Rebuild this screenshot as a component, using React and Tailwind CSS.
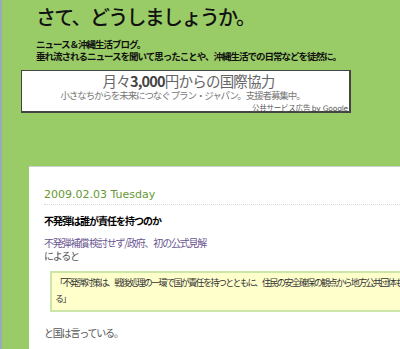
import React from "react";

const jp = { fontFamily: '"Noto Sans CJK JP", "Noto Sans", sans-serif' };

const App = () => {
  return (
    <div
      className="w-[400px] h-[349px] overflow-hidden bg-[#99cc66] border-l-2 border-[#9aaabb] text-black"
      style={jp}
    >
      {/* Header */}
      <div className="pl-[34px] pt-[4px]">
        <h1 className="text-[20px] leading-[26px] font-medium tracking-[-1.7px] text-[#111]">
          さて、どうしましょうか。
        </h1>
        <div className="mt-[8px] text-[9.5px] leading-[12px] font-bold tracking-[-1px] text-[#111]">
          <p>ニュース＆沖縄生活ブログ。</p>
          <p>垂れ流されるニュースを聞いて思ったことや、沖縄生活での日常などを徒然に。</p>
        </div>
      </div>

      {/* Ad */}
      <div className="ml-[19px] mt-[8px] w-[330px] h-[43px] bg-white border border-[#444] border-b-2 border-r-2 flex flex-col items-center">
        <p className="mt-[1px] text-[14.5px] leading-[17px] text-[#666] tracking-[-0.8px] pl-[6px]">
          月々<span className="font-bold text-[#444]">3,000</span>円からの国際協力
        </p>
        <p className="text-[9.5px] leading-[12px] text-[#777] tracking-[-1.1px] -ml-[6px]">
          小さなちからを未来につなぐ プラン・ジャパン。支援者募集中。
        </p>
        <p className="self-end pr-[1px] text-[7.5px] leading-[9px] text-[#555] tracking-[-0.2px] mt-[2px]">
          公共サービス広告 <span style={{ fontFamily: '"DejaVu Sans", sans-serif' }}>by Google</span>
        </p>
      </div>

      {/* Main */}
      <div className="ml-[27px] mt-[53px] bg-white border-t border-[#cfcfcf] h-[200px] pl-[15px] pt-[21px]">
        <div
          className="text-[11px] leading-[13px] text-[#669933] pb-[3px] border-b border-dotted border-[#d8d8d8]"
          style={{ fontFamily: '"DejaVu Sans", sans-serif' }}
        >
          2009.02.03 Tuesday
        </div>
        <h2 className="mt-[9px] text-[10px] leading-[14px] font-bold tracking-[-1px] text-black">
          不発弾は誰が責任を持つのか
        </h2>
        <p className="mt-[8px] text-[10px] leading-[13px] text-[#6a5590] tracking-[-1.2px]">
          不発弾補償 検討せず/政府、初の公式見解
        </p>
        <p className="text-[10px] leading-[13px] text-[#555] tracking-[-1.2px]">によると</p>
        <div className="mt-[9px] ml-[6px] w-[360px] overflow-hidden bg-[#ffffcc] border-2 border-r-0 border-[#cce6a8] pl-[3px] pt-[2px] pb-[3px]">
          <p className="text-[9px] leading-[16px] text-[#333] tracking-[-1.6px] whitespace-nowrap">
            「不発弾対策は、戦後処理の一環で国が責任を持つとともに、住民の安全確保の観点から地方公共団体も発
            <br />
            る」
          </p>
        </div>
        <p className="mt-[14px] text-[10px] leading-[13px] text-[#555] tracking-[-1.2px]">
          と国は言っている。
        </p>
      </div>
    </div>
  );
};

export default App;
